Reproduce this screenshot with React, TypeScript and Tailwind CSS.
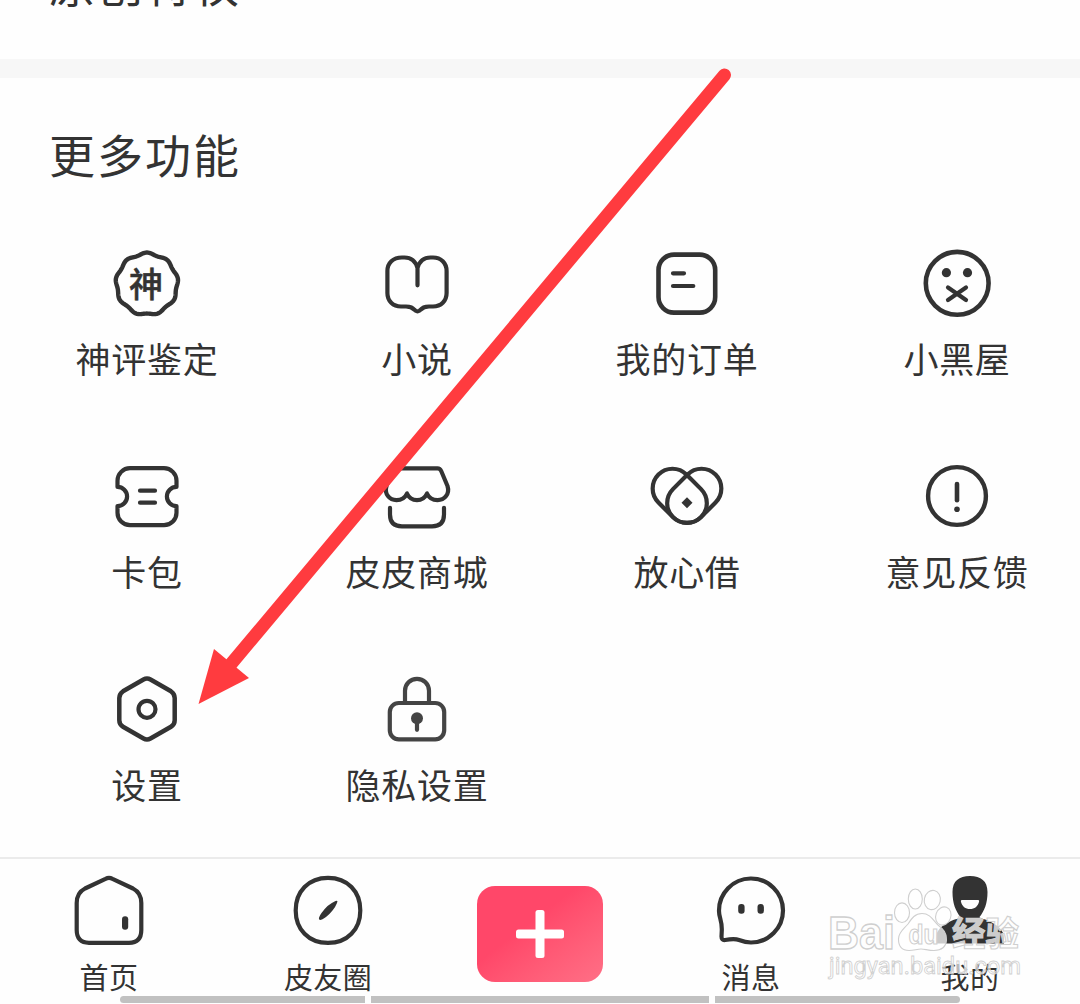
import type { ReactNode } from "react";

interface ItemProps {
  label: string;
  children: ReactNode;
}

interface TabProps extends ItemProps {
  width: string;
}

// outline of the badge: a circle with nine soft bumps
const badgePath =
  Array.from({ length: 180 }, (_, i) => {
    const a = (i * Math.PI) / 90;
    const r = 30.5 + 0.95 * Math.cos(9 * a);
    const x = (39.9 + r * Math.sin(a)).toFixed(2);
    const y = (40 - r * Math.cos(a)).toFixed(2);
    return `${i === 0 ? "M" : "L"}${x} ${y}`;
  }).join("") + "Z";

const Icon = ({ children }: { children: ReactNode }) => (
  <svg
    className="block h-20 w-20 shrink-0"
    viewBox="0 0 80 80"
    fill="none"
    stroke="#333333"
    strokeWidth="4.2"
    strokeLinecap="round"
    strokeLinejoin="round"
  >
    {children}
  </svg>
);

const Item = ({ label, children }: ItemProps) => (
  <div className="flex h-[213px] flex-col items-center">
    <Icon>{children}</Icon>
    <div className="mt-3.5 text-[35px] leading-10 tracking-[0.7px]">{label}</div>
  </div>
);

const Tab = ({ label, width, children }: TabProps) => (
  <div className={`flex flex-col items-center pt-3 ${width}`}>
    <Icon>{children}</Icon>
    <div className="mt-[9px] text-[29px] leading-8 tracking-[0.4px]">{label}</div>
  </div>
);

const Arrow = () => (
  <svg className="pointer-events-none absolute top-0 left-0" width="1080" height="857" viewBox="0 0 1080 857">
    <path d="M724.5 75L231 664" stroke="#ff3b3f" strokeWidth="13" strokeLinecap="round" />
    <path d="M198.5 704L214 649L249 678Z" fill="#ff3b3f" />
  </svg>
);

const Watermark = () => (
  <svg
    className="pointer-events-none absolute top-[880px] left-[820px]"
    width="210"
    height="110"
    viewBox="0 0 210 110"
    fill="#ffffff"
    fillOpacity="0.75"
    stroke="#cfcfcf"
    strokeWidth="1.1"
  >
    <ellipse cx="82" cy="32.7" rx="7.5" ry="9.8" />
    <ellipse cx="95.3" cy="19" rx="7" ry="10" />
    <ellipse cx="112.3" cy="20" rx="8" ry="9.7" transform="rotate(12 112.3 20)" />
    <ellipse cx="123.3" cy="36" rx="7.5" ry="9.3" transform="rotate(20 123.3 36)" />
    <path d="M102 33.5C110 33.5 113 40 118 45C123 49 127 53 126.5 60C126 67 121 70.5 114 70.5C108 70.5 105 69 101 69C97 69 94 70.5 89 70.5C82 70.5 78.5 66 78.5 59C78.5 52 84 49 88 44C92 38 95 33.5 102 33.5Z" />
    <text x="8" y="69" fontSize="46" fontWeight="700" strokeWidth="1.3" textLength="67" lengthAdjust="spacingAndGlyphs" fontFamily="Liberation Sans, sans-serif">Bai</text>
    <text x="88.5" y="64" fontSize="27" fontWeight="700" textLength="30" lengthAdjust="spacingAndGlyphs" fontFamily="Liberation Sans, sans-serif">du</text>
    <text x="132" y="66" fontSize="34" fontWeight="700" textLength="67" lengthAdjust="spacingAndGlyphs" fontFamily="Noto Sans CJK SC, sans-serif">经验</text>
    <text x="9" y="94" fontSize="23" strokeWidth="0.8" fillOpacity="0.6" textLength="192" lengthAdjust="spacingAndGlyphs" fontFamily="Roboto, sans-serif">jingyan.baidu.com</text>
  </svg>
);

const App = () => {
  return (
    <div className="relative flex h-[1004px] w-[1080px] flex-col overflow-hidden bg-[#fefefe] font-['Noto_Sans_CJK_SC',sans-serif] text-[#333333]">
      <div className="h-[59px] shrink-0 overflow-hidden pl-[49px]">
        <div className="-mt-[48px] text-[46px] leading-[60px] tracking-[2px]">原创特权</div>
      </div>
      <div className="h-[19px] shrink-0 bg-[#f7f7f7]" />

      <div className="h-[779px] shrink-0">
        <div className="pt-[45px] pl-[49px] text-[46px] leading-[60px] tracking-[2px]">更多功能</div>
        <div className="mt-[61px] ml-3 grid w-[1080px] grid-cols-[repeat(4,270px)]">
          <Item label="神评鉴定">
            <path d={badgePath} strokeWidth="4.4" />
            <text x="39" y="52.5" fontSize="34" fontWeight="500" textAnchor="middle" fill="#333333" strokeWidth="0.5">神</text>
          </Item>
          <Item label="小说">
            <path d="M40.5 41.3V24C38.5 17 33.5 13.5 27.5 13.5H25C16 13.5 10.4 19 10.4 27V49C10.4 57 16 62.5 24 62.5H29C34 62.5 35.5 64 38.5 66.6Q40.5 68 42.5 66.6C45.5 64 47 62.5 52 62.5H56C64 62.5 69.6 57 69.6 49V27C69.6 19 64 13.5 56 13.5H53.5C47.5 13.5 42.5 17 40.5 24" />
          </Item>
          <Item label="我的订单">
            <rect x="11.5" y="10.6" width="56.7" height="58" rx="15.5" strokeWidth="4.6" />
            <path d="M26 29.3H37M26 42H46.3" />
          </Item>
          <Item label="小黑屋">
            <circle cx="40.2" cy="39.3" r="31.4" strokeWidth="4.6" />
            <circle cx="29.4" cy="28.7" r="4.6" fill="#333333" stroke="none" />
            <circle cx="50.5" cy="28.7" r="4.6" fill="#333333" stroke="none" />
            <path d="M31 43.5L49 56M49 43.5L31 56" />
          </Item>
          <Item label="卡包">
            <path d="M23 11.2H57A12.5 12.5 0 0 1 69.5 23.7V29.9A9.6 9.6 0 0 0 69.5 49.1V55.7A12.5 12.5 0 0 1 57 68.2H23A12.5 12.5 0 0 1 10.5 55.7V49.1A9.6 9.6 0 0 0 10.5 29.9V23.7A12.5 12.5 0 0 1 23 11.2Z" />
            <path d="M33 33.7H48M33 45.7H48" />
          </Item>
          <Item label="皮皮商城">
            <path d="M19.5 11.3H60.5Q63 11.3 64.2 14L70.5 29C73 37 67.5 43.2 60.5 43.2Q53 43.2 50 36.5Q47 43.2 40 43.2Q33 43.2 30 36.5Q27 43.2 19.5 43.2C12.5 43.2 7 37 9.5 29L15.8 14Q17 11.3 19.5 11.3Z" />
            <path d="M13 50.8V57.5Q13 69.3 25 69.3H55Q67 69.3 67 57.5V50.8" />
          </Item>
          <Item label="放心借">
            <rect x="2.65" y="19.05" width="60.2" height="39.6" rx="19.8" transform="rotate(45 32.75 38.85)" />
            <rect x="17.15" y="19.05" width="60.2" height="39.6" rx="19.8" transform="rotate(-45 47.25 38.85)" />
            <path d="M40 40.2L45.5 45.7L40 51.2L34.5 45.7Z" fill="#333333" stroke="none" />
          </Item>
          <Item label="意见反馈">
            <circle cx="40" cy="39" r="28.9" strokeWidth="4.4" />
            <path d="M40 27V43.3" strokeWidth="4.6" />
            <circle cx="40" cy="52.3" r="2.8" fill="#333333" stroke="none" />
          </Item>
          <Item label="设置">
            <path d="M36.5 9.5Q40 7.5 43.5 9.5L64 21.3Q67.7 23.6 67.7 28V50.3Q67.7 54.6 64 56.8L43.5 68.5Q40 70.5 36.5 68.5L16 56.8Q12.3 54.6 12.3 50.3V28Q12.3 23.6 16 21.3Z" strokeWidth="4.5" />
            <circle cx="40" cy="39.3" r="8.5" />
          </Item>
          <Item label="隐私设置">
            <g stroke="#444444">
              <rect x="12.8" y="33" width="54.4" height="36.3" rx="9" />
              <path d="M28 32V20.8A12 12 0 0 1 52 20.8V32" />
              <circle cx="40" cy="48.3" r="6" fill="#444444" stroke="none" />
              <path d="M40 50V59.8" />
            </g>
          </Item>
        </div>
      </div>

      <div className="flex h-[147px] shrink-0 border-t-2 border-[#ebebeb]">
        <Tab label="首页" width="w-[218px]">
          <path d="M36.5 7.8Q40 6 43.5 7.8L64 17.5Q72.3 21.8 72.3 32V59Q72.3 71.8 60 71.8H20Q7.7 71.8 7.7 59V32Q7.7 21.8 16 17.5Z" />
          <rect x="53" y="45.3" width="6.2" height="13.4" rx="3" fill="#333333" stroke="none" />
        </Tab>
        <Tab label="皮友圈" width="w-[220px]">
          <path d="M40 6.9C59.5 6.9 72.3 20.5 72.3 39.4C72.3 58.3 59.5 71.9 40 71.9C20.5 71.9 7.7 58.3 7.7 39.4C7.7 20.5 20.5 6.9 40 6.9Z" />
          <path d="M31.2 48.6Q30 47 33.5 42Q40 33 47.5 30Q50.5 29 49 32Q46 39.5 38 46Q32.5 50 31.2 48.6Z" fill="#333333" stroke="none" />
        </Tab>
        <div className="flex w-[204px] justify-center pt-[27px]">
          <div className="flex h-24 w-[126px] items-center justify-center rounded-[18px] bg-linear-to-br from-[#ff4769] from-40% to-[#ff6f86]">
            <svg width="48" height="48" viewBox="0 0 48 48" fill="#ffffff">
              <rect x="19.5" y="0" width="9" height="48" rx="2.5" />
              <rect x="0" y="19.5" width="48" height="9" rx="2.5" />
            </svg>
          </div>
        </div>
        <Tab label="消息" width="w-[218px]">
          <path d="M40 71.5A32 32 0 1 0 8 40C8 47 11 49 10.8 59L10.5 65.5Q10.5 69.5 14 69C20 68 24 67.5 28 69C32 70.5 35 71.5 40 71.5Z" />
          <rect x="27.2" y="33" width="6.4" height="9.8" rx="3" fill="#333333" stroke="none" />
          <rect x="46.5" y="33" width="6.4" height="9.8" rx="3" fill="#333333" stroke="none" />
        </Tab>
        <Tab label="我的" width="w-[220px]">
          <g stroke="none">
            <path d="M40 5C51 5 57.5 10 57.5 21C57.5 32 54.5 40 49.5 46C51 48 54 47.5 60 50.5C69 55 74 60 74 67V72.5H6V67C6 60 11 55 20 50.5C26 47.5 29 48 30.5 46C25.5 40 22.5 32 22.5 21C22.5 10 29 5 40 5Z" fill="#333333" />
            <path d="M31.8 29H48.2Q49.5 29 49.1 30.5C48 35.5 44.5 38 40 38C35.5 38 32 35.5 30.9 30.5Q30.5 29 31.8 29Z" fill="#fefefe" />
          </g>
        </Tab>
      </div>

      <Watermark />

      <div className="absolute top-[996px] left-[120px] flex gap-1.5">
        <div className="h-[7px] w-[245px] rounded-l-full bg-[#c1c1c1]" />
        <div className="h-[7px] w-[338px] bg-[#c1c1c1]" />
        <div className="h-[7px] w-[245px] rounded-r-full bg-[#c1c1c1]" />
      </div>

      <Arrow />
    </div>
  );
};

export default App;
